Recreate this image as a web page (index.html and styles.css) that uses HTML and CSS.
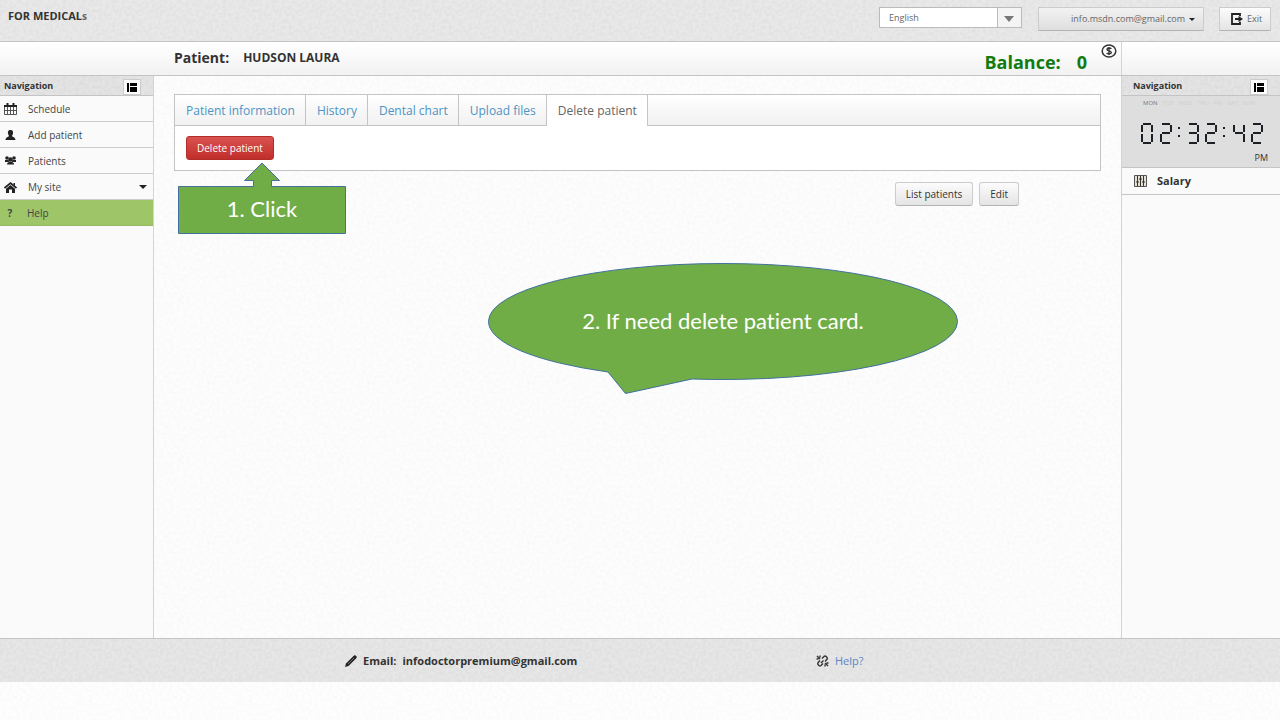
FILE: index.html
```html
<!DOCTYPE html>
<html lang="en">
<head>
<meta charset="utf-8">
<title>For Medicals</title>
<link rel="stylesheet" href="styles.css">
</head>
<body>
<svg class="defs" aria-hidden="true">
  <symbol id="i-panel" viewBox="0 0 10 9"><path d="M0 0h2v9H0zM3 0h7v3H3zM3 4h7v5H3z"/></symbol>
</svg>

<header class="topbar">
  <strong class="brand">FOR MEDICAL<small class="brand-s">s</small></strong>
  <div class="topbar-tools">
    <select class="language" aria-label="Language"><option>English</option></select>
    <button class="btn account" type="button">info.msdn.com@gmail.com <span class="caret"></span></button>
    <button class="btn exit" type="button">
      <svg class="icon" viewBox="0 0 12 12" width="12" height="12"><path d="M9 3.2V1H1v10h8V8.800M4 6h4" fill="none" stroke="#222" stroke-width="1.8"/><path d="M7.500 3 12 6 7.500 9z"/></svg>
      Exit
    </button>
  </div>
</header>

<div class="titlebar">
  <div class="titlebar-main">
    <h1 class="patient"><span>Patient:</span><span class="patient-name">HUDSON LAURA</span></h1>
    <p class="balance"><span>Balance:</span><span>0</span></p>
    <svg class="coin" viewBox="0 0 16 14" width="16" height="14"><ellipse cx="8" cy="7" rx="6.800" ry="6" fill="none" stroke="#333" stroke-width="1.500"/><path d="M10.300 4.800C9.500 3.700 6 3.600 6 5.400c0 1.900 4.300 1.100 4.300 3 0 1.800-3.700 1.800-4.600.6M8 3v8" fill="none" stroke="#333" stroke-width="1.400"/></svg>
  </div>
  <div class="titlebar-side"></div>
</div>

<div class="columns">
  <aside class="sidebar">
    <div class="side-head">
      <h2>Navigation</h2>
      <button class="toggle" type="button" aria-label="Toggle navigation"><svg width="10" height="9"><use href="#i-panel"/></svg></button>
    </div>
    <nav class="menu">
      <a href="#"><svg class="icon" viewBox="0 0 13 12" width="13" height="12"><path d="M0 2h13v2H0zM2.500 0h2v2h-2zM8.500 0h2v2h-2z"/><path d="M.5 4v7.500h12V4M.5 7.500h12M3.500 4v7.500M6.500 4v7.500M9.500 4v7.500" fill="none" stroke="#444" stroke-width=".9"/></svg>Schedule</a>
      <a href="#"><svg class="icon" viewBox="0 0 13 12" width="13" height="12"><path d="M6.500 1C9 1 9.300 3 9 4.500 8.800 5.800 8.200 6.400 8 7c.5 1 3.500 1.300 3.500 4h-10C1.500 8.300 4.500 8 5 7c-.2-.6-.8-1.200-1-2.500C3.700 3 4 1 6.500 1z"/></svg>Add patient</a>
      <a href="#"><svg class="icon" viewBox="0 0 13 12" width="13" height="12"><circle cx="3" cy="3" r="1.800"/><circle cx="10" cy="3" r="1.800"/><circle cx="6.500" cy="4.500" r="2.200"/><path d="M1 5h3.500l1 2H1zM12 5H8.500l-1 2H12zM3 9.500C3 7.500 4.500 7 6.500 7s3.500.5 3.500 2.500z"/></svg>Patients</a>
      <a href="#"><svg class="icon" viewBox="0 0 13 12" width="13" height="12"><path d="M.5 7 6.500 2l6 5" fill="none" stroke="#222" stroke-width="1.700"/><path d="M2 7.800 6.500 4 11 7.800V12H8V8.500H5V12H2zM9.500 2H11v3L9.500 3.500z"/></svg>My site<span class="caret"></span></a>
      <a class="active" href="#"><span class="icon question">?</span>Help</a>
    </nav>
  </aside>

  <main class="main">
    <section class="panel">
      <nav class="tabs">
        <a href="#">Patient information</a>
        <a href="#">History</a>
        <a href="#">Dental chart</a>
        <a href="#">Upload files</a>
        <a href="#" class="current" aria-current="page">Delete patient</a>
      </nav>
      <div class="panel-body"><button class="danger" type="button">Delete patient</button></div>
    </section>
    <div class="actions">
      <button class="btn" type="button">List patients</button>
      <button class="btn" type="button">Edit</button>
    </div>

    <div class="callout step-one">
      <svg viewBox="0 0 168 73" width="168" height="73"><path d="M.5 24.500H75.500V18.500H66.500L84 1l17.500 17.500H93.500V24.500H167.500V71.500H.5z"/></svg>
      <p>1. Click</p>
    </div>
    <div class="callout step-two">
      <svg viewBox="0 0 470 132" width="470" height="132"><path d="M120 109A234.500 58 0 0 1 .5 58.500A234.500 58 0 0 1 469.500 58.500A234.500 58 0 0 1 204 116L137.500 130.500z"/></svg>
      <p>2. If need delete patient card.</p>
    </div>
  </main>

  <aside class="rightbar">
    <div class="side-head">
      <h2>Navigation</h2>
      <button class="toggle" type="button" aria-label="Toggle navigation"><svg width="10" height="9"><use href="#i-panel"/></svg></button>
    </div>
    <div class="clock">
      <ul class="days"><li class="today">MON</li><li>TUE</li><li>WED</li><li>THU</li><li>FRI</li><li>SAT</li><li>SUN</li></ul>
      <svg class="segments" viewBox="0 0 124 22" width="124" height="22" role="img" aria-label="02:32:42">
        <g fill="none" stroke="#1c1f26" stroke-width="2">
          <path d="M3 2H11M12 3V10M12 12V20M11 21H3M2 20V12M2 10V3"/>
          <path d="M22 2H30M31 3V10M30 11H22M21 12V20M22 21H30"/>
          <path d="M49 2H57M58 3V10M57 11H49M58 12V20M57 21H49"/>
          <path d="M67 2H75M76 3V10M75 11H67M66 12V20M67 21H75"/>
          <path d="M94 3V10M95 11H103M104 3V10M104 12V20"/>
          <path d="M113 2H121M122 3V10M121 11H113M112 12V20M113 21H121"/>
          <path d="M38 6H40M38 14H40M83 6H85M83 14H85"/>
        </g>
      </svg>
      <span class="meridiem">PM</span>
    </div>
    <a class="salary" href="#"><svg class="icon" viewBox="0 0 13 12" width="13" height="12"><path d="M.5.5h12v11H.5z" fill="#e6dfd3" stroke="#555"/><path d="M3.500 1v10M6.500 1v10M9.500 1v10M2 7h3M5 4h3M8 7h3" stroke="#333" fill="none"/></svg>Salary</a>
  </aside>
</div>

<footer class="footer">
  <p class="email"><svg class="icon" viewBox="0 0 12 12" width="12" height="12"><path d="M0 12 1 8.500 8.500 1 10 0l2 2-1 1.500L3.500 11z"/><path d="M3 9 9 3" stroke="#999" stroke-width=".7"/></svg><span>Email:</span> infodoctorpremium@gmail.com</p>
  <p class="help"><svg class="icon" viewBox="0 0 13 12" width="13" height="12"><path d="M6 3.500 8 1.500c1.500-1.200 4 .8 3 2.800L9 6.500M7 8.500l-2 2c-1.500 1.200-4-.8-3-2.800L4 5.500M1 1l3 3M4 .5v2M.5 4h2M12 11 9 8M9 9.500v2M10.500 8h2M5 8l2.500-2.500" fill="none" stroke="#333" stroke-width="1.400"/></svg><a href="#">Help?</a></p>
</footer>
</body>
</html>
```
FILE: styles.css
```css
* { box-sizing: border-box; }

:root {
  --grain: url("data:image/svg+xml,%3Csvg xmlns='http://www.w3.org/2000/svg' width='160' height='160'%3E%3Cfilter id='n'%3E%3CfeTurbulence type='fractalNoise' baseFrequency='.3' numOctaves='2' stitchTiles='stitch'/%3E%3CfeColorMatrix values='0 0 0 0 0 0 0 0 0 0 0 0 0 0 0 .08 0 0 0 -.028'/%3E%3C/filter%3E%3Crect width='160' height='160' filter='url(%23n)'/%3E%3C/svg%3E");
  --grain-light: url("data:image/svg+xml,%3Csvg xmlns='http://www.w3.org/2000/svg' width='160' height='160'%3E%3Cfilter id='n'%3E%3CfeTurbulence type='fractalNoise' baseFrequency='.3' numOctaves='2' stitchTiles='stitch'/%3E%3CfeColorMatrix values='0 0 0 0 0 0 0 0 0 0 0 0 0 0 0 .04 0 0 0 -.014'/%3E%3C/filter%3E%3Crect width='160' height='160' filter='url(%23n)'/%3E%3C/svg%3E");
  --line: #c4c4c4;
}

body {
  margin: 0;
  min-height: 100vh;
  padding-bottom: 38px;
  display: flex;
  flex-direction: column;
  background: var(--grain-light) #fefefe;
  color: #333;
  font: 11px/16px "Open Sans", sans-serif;
}

h1, h2, p, ul { margin: 0; padding: 0; }
a { color: inherit; text-decoration: none; }
button, select { font: inherit; color: inherit; }
.defs { position: absolute; width: 0; height: 0; }
.icon { fill: #222; flex: none; }

.caret {
  border: 4px solid transparent;
  border-top-color: #222;
  border-bottom: 0;
}

.topbar {
  height: 42px;
  display: flex;
  justify-content: space-between;
  align-items: flex-start;
  padding: 7px 9px 0 8px;
  border-bottom: 1px solid var(--line);
  background: var(--grain) #e9e9e9;
}
.brand { line-height: 18px; }
.brand-s { font-size: 10px; color: #666; }
.topbar-tools { display: flex; align-items: flex-start; font-size: 9px; color: #666; }

.language {
  width: 143px;
  height: 21px;
  margin-right: 16px;
  padding: 0 9px;
  border: 1px solid #bbb;
  appearance: none;
  background: url("data:image/svg+xml,%3Csvg xmlns='http://www.w3.org/2000/svg' width='24' height='19'%3E%3Cpath d='M0 0h24v19H0z' fill='%23f4f4f4'/%3E%3Cpath d='M.5 0v19' stroke='%23bbb'/%3E%3Cpath d='M7 8h10l-5 6z' fill='%23777'/%3E%3C/svg%3E") no-repeat right top #fff;
}

.btn {
  height: 24px;
  padding: 0 10px;
  border: 1px solid #ccc;
  border-bottom-color: #b3b3b3;
  border-radius: 3px;
  background: linear-gradient(#fcfcfc, #e4e4e4);
}
.account {
  width: 166px;
  margin: 0 15px 0 0;
  padding: 0 8px;
  display: flex;
  justify-content: flex-end;
  align-items: center;
  gap: 4px;
  border-radius: 1px;
  background: linear-gradient(#f2f2f2, #dedede);
}
.account .caret { border-width: 3px 3px 0; }
.exit {
  width: 52px;
  padding: 0 8px 0 11px;
  display: flex;
  align-items: center;
  gap: 4px;
  border-radius: 1px;
}

.titlebar {
  display: flex;
  height: 34px;
  border-bottom: 1px solid var(--line);
  background: linear-gradient(#fff, #f2f2f2);
}
.titlebar-main { flex: 1; display: flex; padding: 0 4px 0 174px; }
.titlebar-side { width: 159px; border-left: 1px solid #d4d4d4; }
.patient { flex: 1; display: flex; gap: 14px; font-size: 14px; line-height: 32px; }
.patient-name { font-size: 12px; }
.balance {
  display: flex;
  gap: 16px;
  margin-right: 14px;
  color: #107c10;
  font-size: 18px;
  font-weight: 700;
  line-height: 40px;
}
.coin { margin-top: 2px; }

.columns { flex: 1; display: flex; }
.sidebar, .rightbar { background: #fafafa; }
.sidebar { width: 154px; border-right: 1px solid #d4d4d4; }
.rightbar { width: 159px; border-left: 1px solid #d4d4d4; }

.side-head {
  height: 20px;
  display: flex;
  align-items: center;
  justify-content: space-between;
  padding: 0 12px 0 4px;
  border-bottom: 1px solid var(--line);
  background: var(--grain) #e4e4e4;
}
.rightbar .side-head { padding-left: 11px; }
.side-head h2 { font-size: 9px; }
.toggle {
  width: 18px;
  height: 16px;
  display: grid;
  place-items: center;
  align-self: flex-end;
  padding: 0;
  border: 1px solid #ccc;
  background: #fcfcfc;
}

.menu { font-size: 10px; }
.menu a {
  height: 26px;
  display: flex;
  align-items: center;
  gap: 11px;
  padding: 0 6px 0 4px;
  border-bottom: 1px solid #ccc;
  color: #444;
}
.menu .caret { margin-left: auto; }
.menu .active { border-color: #93b963; background: #9fc569; color: #444; }
.question { width: 12px; text-align: center; font-weight: 700; }

.main { flex: 1; position: relative; padding: 18px 20px; background: var(--grain-light) #fdfdfd; }
.panel { border: 1px solid var(--line); background: #fff; }
.tabs {
  display: flex;
  height: 31px;
  border-bottom: 1px solid var(--line);
  background: linear-gradient(#fff, #f1f1f1);
  font-size: 12px;
  line-height: 32px;
  color: #4c94c4;
}
.tabs a { height: 30px; padding: 0 10px 0 11px; border-right: 1px solid var(--line); }
.tabs .current { height: 31px; background: #fff; color: #666; }
.panel-body { padding: 10px 11px; }
.danger {
  display: block;
  height: 24px;
  padding: 0 10px;
  border: 1px solid #b32c2c;
  border-radius: 3px;
  background: linear-gradient(#d9534f, #c12e2a);
  color: #fff;
  font-size: 10px;
}
.actions { display: flex; justify-content: flex-end; gap: 6px; padding: 11px 82px 0 0; font-size: 10px; }

.callout { position: absolute; }
.callout svg { display: block; fill: #70ad47; stroke: #41719c; }
.callout p {
  position: absolute;
  left: 0;
  right: 0;
  text-align: center;
  color: #fff;
  font: 22px/28px Lato, sans-serif;
  font-variant-ligatures: none;
}
.step-one { left: 24px; top: 86px; }
.step-one p { top: 33px; }
.step-two { left: 334px; top: 187px; }
.step-two p { top: 44px; }

.clock {
  height: 72px;
  display: flex;
  flex-direction: column;
  padding: 2px 12px 0 18px;
  border-bottom: 1px solid var(--line);
  background: #dedede;
}
.days {
  display: flex;
  gap: 5px;
  padding-left: 3px;
  list-style: none;
  font-size: 6px;
  line-height: 10px;
  color: #cfcfcf;
}
.days .today { color: #777; }
.segments { margin-top: 14px; }
.meridiem { margin-top: 6px; align-self: flex-end; font-size: 9px; }
.salary {
  height: 27px;
  display: flex;
  align-items: center;
  gap: 10px;
  padding-left: 12px;
  border-bottom: 1px solid var(--line);
  font-weight: 700;
}

.footer {
  height: 44px;
  display: grid;
  grid-template-columns: 471px 1fr;
  align-items: center;
  padding: 1px 0 0 345px;
  border-top: 1px solid var(--line);
  background: var(--grain) #e7e7e7;
}
.footer p { display: flex; align-items: center; gap: 6px; }
.email { font-weight: 700; }
.help a { color: #5b86c4; }
```
